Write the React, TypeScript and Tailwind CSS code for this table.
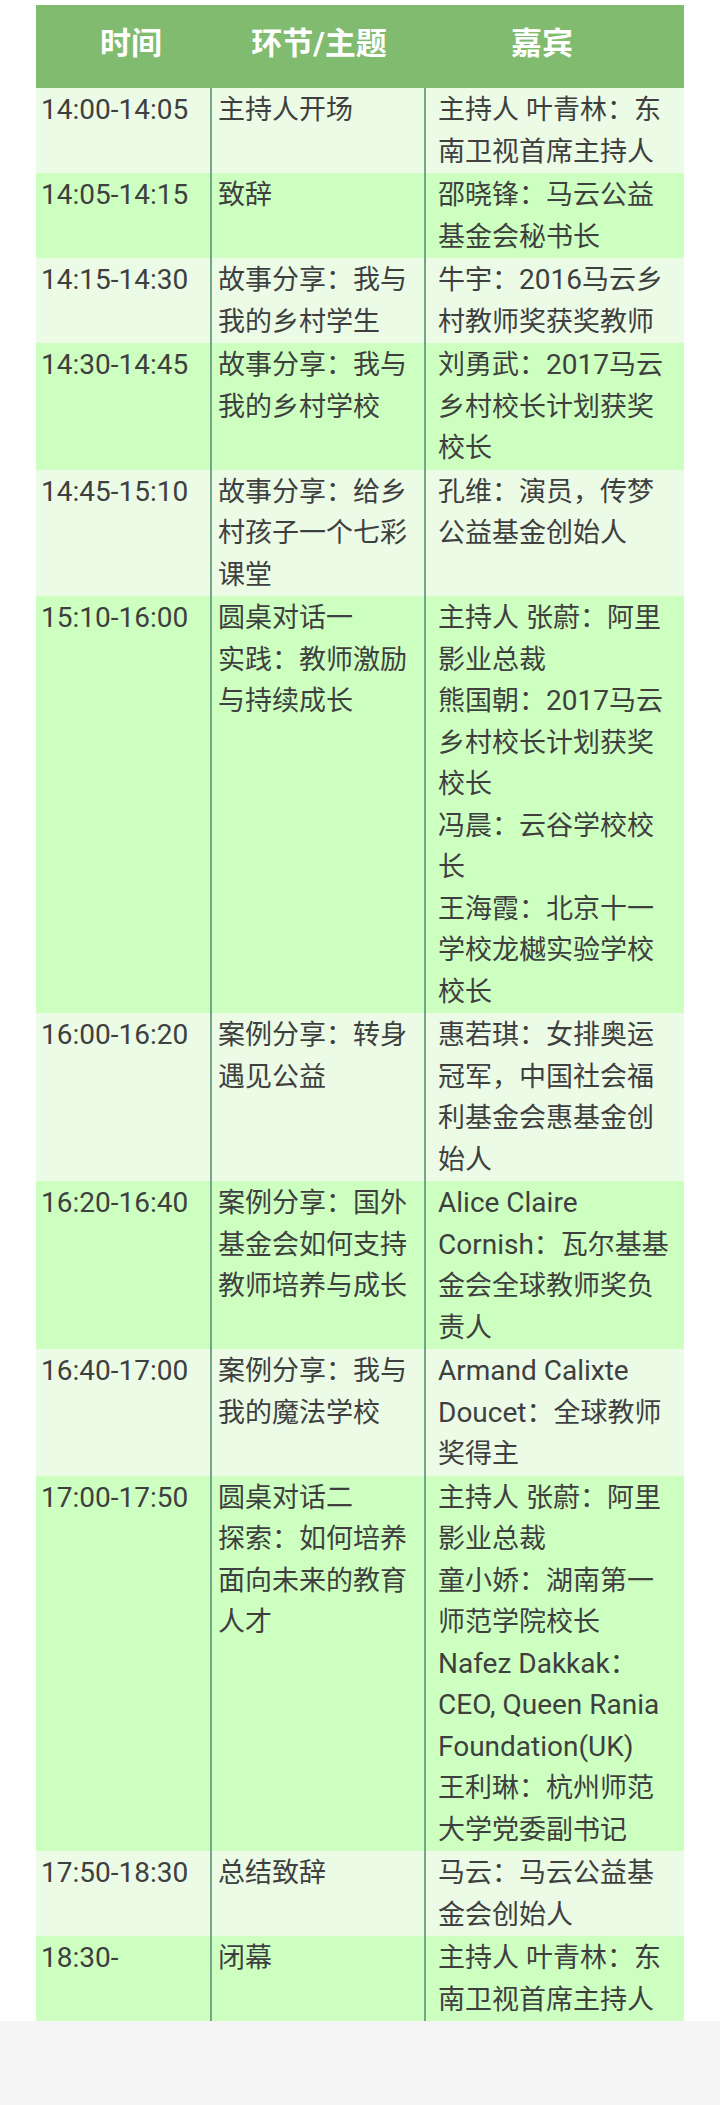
type Row = { time: string; topic: string[]; guests: string[] };

const ROWS: Row[] = [
  { time: '14:00-14:05', topic: ['主持人开场'], guests: ['主持人 叶青林：东', '南卫视首席主持人'] },
  { time: '14:05-14:15', topic: ['致辞'], guests: ['邵晓锋：马云公益', '基金会秘书长'] },
  { time: '14:15-14:30', topic: ['故事分享：我与', '我的乡村学生'], guests: ['牛宇：2016马云乡', '村教师奖获奖教师'] },
  { time: '14:30-14:45', topic: ['故事分享：我与', '我的乡村学校'], guests: ['刘勇武：2017马云', '乡村校长计划获奖', '校长'] },
  { time: '14:45-15:10', topic: ['故事分享：给乡', '村孩子一个七彩', '课堂'], guests: ['孔维：演员，传梦', '公益基金创始人'] },
  {
    time: '15:10-16:00',
    topic: ['圆桌对话一', '实践：教师激励', '与持续成长'],
    guests: [
      '主持人 张蔚：阿里', '影业总裁', '熊国朝：2017马云', '乡村校长计划获奖', '校长',
      '冯晨：云谷学校校', '长', '王海霞：北京十一', '学校龙樾实验学校', '校长',
    ],
  },
  { time: '16:00-16:20', topic: ['案例分享：转身', '遇见公益'], guests: ['惠若琪：女排奥运', '冠军，中国社会福', '利基金会惠基金创', '始人'] },
  { time: '16:20-16:40', topic: ['案例分享：国外', '基金会如何支持', '教师培养与成长'], guests: ['Alice Claire', 'Cornish：瓦尔基基', '金会全球教师奖负', '责人'] },
  { time: '16:40-17:00', topic: ['案例分享：我与', '我的魔法学校'], guests: ['Armand Calixte', 'Doucet：全球教师', '奖得主'] },
  {
    time: '17:00-17:50',
    topic: ['圆桌对话二', '探索：如何培养', '面向未来的教育', '人才'],
    guests: [
      '主持人 张蔚：阿里', '影业总裁', '童小娇：湖南第一', '师范学院校长', 'Nafez Dakkak：',
      'CEO, Queen Rania', 'Foundation(UK)', '王利琳：杭州师范', '大学党委副书记',
    ],
  },
  { time: '17:50-18:30', topic: ['总结致辞'], guests: ['马云：马云公益基', '金会创始人'] },
  { time: '18:30-', topic: ['闭幕'], guests: ['主持人 叶青林：东', '南卫视首席主持人'] },
];

// CJK glyphs in the shot run a touch narrower than the Latin text
const CJK = /([\u3000-\u9fff\uff00-\uffef]+)/;

function Line({ text }: { text: string }) {
  const parts = text.split(CJK).filter(Boolean);
  return (
    <div className="h-[41.5px] whitespace-nowrap">
      {parts.map((p, i) =>
        CJK.test(p) ? (
          <span key={i} className="text-[27px] leading-none">{p}</span>
        ) : (
          <span key={i} className="leading-none">{p}</span>
        ),
      )}
    </div>
  );
}

export default function App() {
  return (
    <div className="min-h-[2105px] bg-white font-[Roboto,'Noto_Sans_CJK_SC',sans-serif] flex flex-col">
      <div className="pt-[5px] px-[36px]">
        {/* header */}
        <div className="flex h-[83px] items-center bg-[#80bb70] pr-[12px] pb-[4px] text-[31px] font-bold text-white">
          <div className="w-[190px] text-center">时间</div>
          <div className="w-[186px] text-center">环节/主题</div>
          <div className="w-[260px] text-center">嘉宾</div>
        </div>

        {/* body */}
        <div className="text-[28px] leading-[41.5px] text-[#3f3f3f]">
          {ROWS.map((r, i) => (
            <div
              key={r.time}
              className={`grid grid-cols-[174px_214px_260px] ${i % 2 === 0 ? 'bg-[#ebfbe6]' : 'bg-[#ccffc0]'}`}
            >
              <div className="py-px pl-[5px] whitespace-nowrap">{r.time}</div>
              <div className="py-px pl-[6px] border-l-2 border-[#72a787]">
                {r.topic.map((t, k) => <Line key={k} text={t} />)}
              </div>
              <div className="py-px pl-[12px] border-l-2 border-[#72a787]">
                {r.guests.map((t, k) => <Line key={k} text={t} />)}
              </div>
            </div>
          ))}
        </div>
      </div>
      <div className="flex-1 bg-[#f5f5f5]" />
    </div>
  );
}
